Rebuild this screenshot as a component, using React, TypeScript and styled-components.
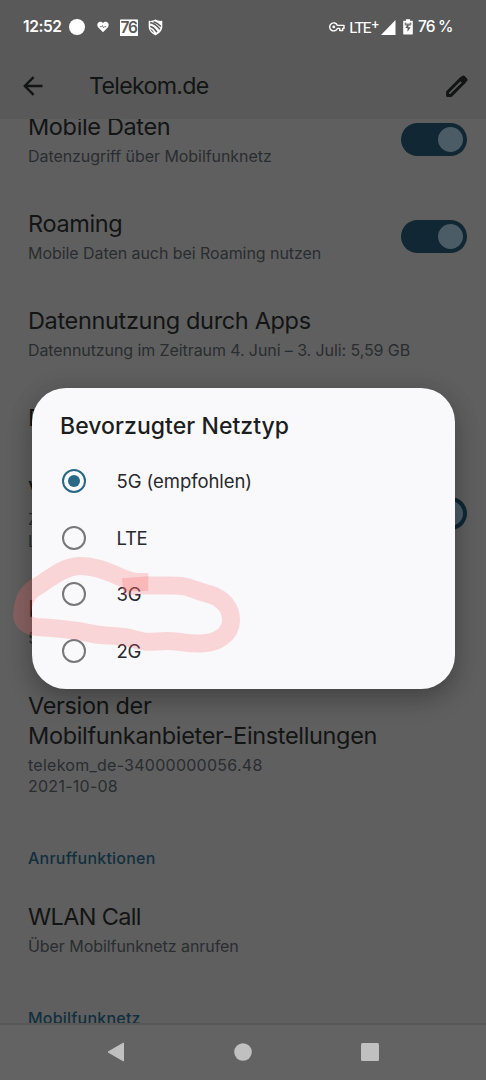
import React from 'react';
import styled, { createGlobalStyle } from 'styled-components';

const GlobalStyle = createGlobalStyle`
  * { box-sizing: border-box; }
  body { margin: 0; background: #5f5f5f; font-family: Inter, Roboto, sans-serif; }
`;

const Screen = styled.div`
  position: relative;
  width: 486px;
  height: 1080px;
  display: flex;
  flex-direction: column;
  overflow: hidden;
  background: #5f5f5f;
`;

const StatusBar = styled.div`
  height: 54px;
  flex: none;
  display: flex;
  justify-content: space-between;
  align-items: center;
  padding: 0 33px 0 23px;
  background: #595959;
  color: #fff;
  svg { display: block; flex: none; }
`;

const StatusGroup = styled.div`
  display: flex;
  align-items: center;
`;

const StatusText = styled.span<{ $width: number; $spacing?: number; $weight?: number }>`
  width: ${p => p.$width}px;
  font-size: 15.5px;
  line-height: 18px;
  font-weight: ${p => p.$weight ?? 500};
  letter-spacing: ${p => p.$spacing ?? 0}px;
  white-space: nowrap;
`;

const Dot = styled.span`
  width: 16px;
  height: 16px;
  margin: 0 12px 0 8px;
  border-radius: 50%;
  background: #fff;
`;

const CalendarBadge = styled.span`
  width: 18px;
  height: 16px;
  margin: 1px 10px 0 11px;
  background: #fff;
  color: #595959;
  font-size: 15.5px;
  line-height: 16px;
  font-weight: 600;
  letter-spacing: -1.2px;
  text-indent: -1px;
  text-align: center;
  box-shadow: 0 -1px 0 -0.2px #ccc;
`;

const NetworkLabel = styled.span`
  display: flex;
  width: 32px;
  margin: 0 0 1px 4px;
  font-family: Lato, sans-serif;
  font-size: 16px;
  line-height: 18px;
  letter-spacing: -1.3px;
  sup { font-size: 13px; line-height: 12px; font-weight: 700; margin-left: 1px; }
`;

const BatteryGroup = styled.span`
  display: flex;
  align-items: center;
  gap: 5px;
  margin-left: 7px;
`;

const AppBar = styled.header`
  height: 65px;
  flex: none;
  display: flex;
  align-items: center;
  padding: 0 18px 1px 23px;
  background: #595959;
  color: #131414;
  svg { display: block; flex: none; }
`;

const AppTitle = styled.h1`
  flex: 1;
  margin: 0 0 0 46px;
  font-size: 23.2px;
  line-height: 30px;
  font-weight: 400;
  letter-spacing: -0.7px;
`;

const Content = styled.main`
  flex: 1;
  min-height: 0;
  overflow: hidden;
`;

const List = styled.div`
  margin-top: -29.75px;
`;

const Row = styled.div<{ $height: number }>`
  height: ${p => p.$height}px;
  display: flex;
  justify-content: space-between;
  padding: 22.75px 19px 0 28px;
`;

const RowTitle = styled.div<{ $spacing?: number }>`
  margin-bottom: 4px;
  font-size: 23.5px;
  line-height: 30px;
  color: #131414;
  letter-spacing: ${p => p.$spacing ?? -0.36}px;
  white-space: pre;
`;

const RowSub = styled.div<{ $spacing?: number }>`
  font-size: 16px;
  line-height: 21.5px;
  color: #2a2d2f;
  letter-spacing: ${p => p.$spacing ?? -0.06}px;
  white-space: pre;
`;

const Switch = styled.span<{ $tall?: boolean }>`
  width: 66px;
  height: 33px;
  flex: none;
  margin-top: ${p => (p.$tall ? 22 : 11)}px;
  padding: 4px;
  border-radius: 17px;
  background: #112733;
  display: flex;
  justify-content: flex-end;
  &::after {
    content: '';
    width: 25px;
    height: 25px;
    border-radius: 50%;
    background: #4b5c66;
  }
`;

const Section = styled.div`
  height: 63px;
  padding: 31px 0 0 28px;
  font-size: 16px;
  line-height: 22px;
  font-weight: 500;
  color: #122f3e;
  letter-spacing: 0.22px;
`;

const NavBar = styled.nav`
  height: 57px;
  flex: none;
  display: flex;
  justify-content: center;
  padding: 0 1px 2px 0;
  border-top: 2px solid #575757;
  background: #636363;
`;

const NavButton = styled.span`
  width: 127px;
  display: flex;
  align-items: center;
  justify-content: center;
`;

const Dialog = styled.section`
  position: absolute;
  left: 31.5px;
  top: 387.5px;
  width: 423px;
  height: 301.5px;
  padding: 23px 29px 0 28.5px;
  border-radius: 34px;
  background: #f9f9fc;
  box-shadow: 0 10px 24px rgba(0, 0, 0, 0.25), 0 2px 28px rgba(0, 0, 0, 0.08);
`;

const DialogTitle = styled.h2`
  margin: 0 0 12.2px;
  font-size: 23px;
  line-height: 30px;
  font-weight: 500;
  letter-spacing: 0.05px;
  color: #1d1e20;
`;

const Option = styled.div<{ $spacing?: number }>`
  height: 56.7px;
  display: flex;
  align-items: center;
  gap: 30.5px;
  padding-left: 2px;
  font-size: 18.5px;
  letter-spacing: ${p => p.$spacing ?? -0.3}px;
  color: #28292c;
`;

const Radio = styled.span<{ $on?: boolean }>`
  width: 24px;
  height: 24px;
  border-radius: 50%;
  border: 2.2px solid ${p => (p.$on ? '#2a6888' : '#77777a')};
  display: flex;
  align-items: center;
  justify-content: center;
  &::after {
    content: '';
    width: 12px;
    height: 12px;
    border-radius: 50%;
    background: ${p => (p.$on ? '#2a6888' : 'transparent')};
  }
`;

const Marker = styled.svg`
  position: absolute;
  left: 0;
  top: 540px;
  pointer-events: none;
`;

const HeartIcon = () => (
  <svg width="12" height="12" viewBox="0 0 12 12">
    <path d="M6 11.3 1.3 6.5C-.2 4.8.1 2.2 1.8 1.3 3.3.4 5 .9 6 2.2 7 .9 8.7.4 10.2 1.3c1.7.9 2 3.5.5 5.2Z" fill="#fff" />
    <path d="M2.8 5.7h1.6l1-1.2 1.1 2.3 1-1.1h1.7" stroke="#595959" strokeWidth=".8" fill="none" />
  </svg>
);

const ShieldIcon = () => (
  <svg width="15" height="17" viewBox="0 0 15 17">
    <path d="M7.5.5C5.5 1.6 3 2.2.7 1.8v6C.7 11.5 3.5 14.6 7.5 16.4c4-1.8 6.8-4.9 6.8-8.6v-6C12 2.2 9.5 1.6 7.5.5Z" fill="#fff" />
    <path d="M2.2 3.4C5.4 4.2 9.2 6.6 12 10.4M5.6 2.8c2.8.8 5.2 2.4 7.3 4.8M2.3 7.2c2.8 1 5 3.2 6.6 6" stroke="#595959" strokeWidth="1.5" fill="none" />
    <path d="M2.2 9.8c1.6.8 2.9 2.1 3.8 4.2-1.8-1.1-3.2-2.5-3.8-4.2Z" fill="#595959" />
  </svg>
);

const KeyIcon = () => (
  <svg width="16" height="10" viewBox="0 0 16 10">
    <path d="M8.4 3.4H15v3h-1.3v2.1h-3V6.4H8.4A4 4 0 1 1 8.4 3.4Z" fill="none" stroke="#fff" strokeWidth="1.4" strokeLinejoin="round" />
    <circle cx="4.8" cy="4.9" r="1.4" fill="#fff" />
  </svg>
);

const SignalIcon = () => (
  <svg width="15" height="15" viewBox="0 0 15 15">
    <path d="M14.5 0v15H0Z" fill="#fff" />
  </svg>
);

const BatteryIcon = () => (
  <svg width="10" height="16" viewBox="0 0 10 16">
    <path d="M3 .3h4v1.4h2.3c.3 0 .5.2.5.5v12.6c0 .4-.2.7-.6.7H.8c-.4 0-.6-.3-.6-.7V2.2c0-.3.2-.5.5-.5H3Z" fill="#fff" />
    <path d="M1.6 3.4h1.6v1h3.6v-1h1.6v2.2l-1 1.2H2.6l-1-1.2Z" fill="#595959" opacity=".75" />
    <path d="M5.4 4.8 2.3 9h2.2v3.8L7.7 8.3H5.4Z" fill="#595959" />
  </svg>
);

const BackIcon = () => (
  <svg width="20" height="20" viewBox="0 0 20 20">
    <path d="M19.5 10H2M10.6 1.2 1.8 10l8.8 8.8" stroke="currentColor" strokeWidth="2.4" fill="none" />
  </svg>
);

const PencilIcon = () => (
  <svg width="22" height="22" viewBox="0 0 22 22">
    <path d="M1.6 20.4v-3.4L15 3.6l3.4 3.4L5 20.4Z" stroke="currentColor" strokeWidth="3" strokeLinejoin="round" fill="none" />
    <path d="m12.6 4.4 3.4-3.4c.8-.8 1.8-.8 2.6 0l2.4 2.4c.8.8.8 1.8 0 2.6l-3.4 3.4Z" fill="currentColor" />
  </svg>
);

type Item = { title: string; sub?: string; height: number; on?: boolean; ts?: number; ss?: number };

const items: Item[] = [
  { title: 'Mobile Daten', sub: 'Datenzugriff über Mobilfunknetz', height: 97, on: true },
  { title: 'Roaming', sub: 'Mobile Daten auch bei Roaming nutzen', height: 97, on: true },
  { title: 'Datennutzung durch Apps', sub: 'Datennutzung im Zeitraum 4. Juni – 3. Juli: 5,59 GB', height: 97, ts: -0.34, ss: -0.09 },
  { title: 'Datenwarnung und -limit', height: 72 },
  { title: 'VoLTE', sub: 'Zur Verbesserung der Sprachqualität\nLTE-Dienste verwenden', height: 118.5, on: true },
  { title: 'Bevorzugter Netztyp', sub: '5G (empfohlen)', height: 97 },
  { title: 'Version der\nMobilfunkanbieter-Einstellungen', sub: 'telekom_de-34000000056.48\n2021-10-08', height: 148, ts: -0.34, ss: 0.26 },
];

const SettingsRow = ({ item }: { item: Item }) => (
  <Row $height={item.height}>
    <div>
      <RowTitle $spacing={item.ts}>{item.title}</RowTitle>
      {item.sub && <RowSub $spacing={item.ss}>{item.sub}</RowSub>}
    </div>
    {item.on && <Switch $tall={item.height > 100} />}
  </Row>
);

export default function App() {
  return (
    <Screen>
      <GlobalStyle />
      <StatusBar>
        <StatusGroup>
          <StatusText $width={38} $spacing={-0.4} $weight={600}>12:52</StatusText>
          <Dot />
          <HeartIcon />
          <CalendarBadge>76</CalendarBadge>
          <ShieldIcon />
        </StatusGroup>
        <StatusGroup>
          <KeyIcon />
          <NetworkLabel>LTE<sup>+</sup></NetworkLabel>
          <SignalIcon />
          <BatteryGroup>
            <BatteryIcon />
            <StatusText $width={35} $spacing={-0.8}>76 %</StatusText>
          </BatteryGroup>
        </StatusGroup>
      </StatusBar>
      <AppBar>
        <BackIcon />
        <AppTitle>Telekom.de</AppTitle>
        <PencilIcon />
      </AppBar>
      <Content>
        <List>
          {items.map(item => <SettingsRow key={item.title} item={item} />)}
          <Section>Anruffunktionen</Section>
          <SettingsRow item={{ title: 'WLAN Call', sub: 'Über Mobilfunknetz anrufen', height: 97, ts: -0.65 }} />
          <Section>Mobilfunknetz</Section>
        </List>
      </Content>
      <NavBar>
        <NavButton>
          <svg width="18" height="20" viewBox="0 0 18 20"><path d="M16.5 1v18L1 10Z" fill="#c0c0c0" stroke="#c0c0c0" strokeLinejoin="round" /></svg>
        </NavButton>
        <NavButton>
          <svg width="18" height="18" viewBox="0 0 18 18"><circle cx="9" cy="9" r="8.8" fill="#c0c0c0" /></svg>
        </NavButton>
        <NavButton>
          <svg width="18" height="18" viewBox="0 0 18 18"><rect width="18" height="18" rx="1.5" fill="#c0c0c0" /></svg>
        </NavButton>
      </NavBar>
      <Dialog>
        <DialogTitle>Bevorzugter Netztyp</DialogTitle>
        <Option $spacing={-0.06}><Radio $on />5G (empfohlen)</Option>
        <Option><Radio />LTE</Option>
        <Option><Radio />3G</Option>
        <Option><Radio />2G</Option>
      </Dialog>
      <Marker width="243" height="120" viewBox="0 0 729 360" fill="none">
        <path
          d="M445 126C420 126 405 128 383 120C345 106 290 75 235 78C185 83 155 113 120 134C80 155 72 175 67 215C63 240 77 258 110 261C180 264 220 269 275 281C300 287 330 286 365 290C390 291 405 302 435 305C460 307 470 303 500 303C540 303 570 314 610 310C650 308 693 285 693 240C693 205 670 176 630 163C600 157 580 144 545 138C520 136 490 136 445 136C420 137 395 136 368 141"
          stroke="#ff6464" strokeOpacity=".24" strokeWidth="54"
        />
        <path d="M366 115 445 109V153L369 154Z" fill="#ff6464" fillOpacity=".26" />
      </Marker>
    </Screen>
  );
}
